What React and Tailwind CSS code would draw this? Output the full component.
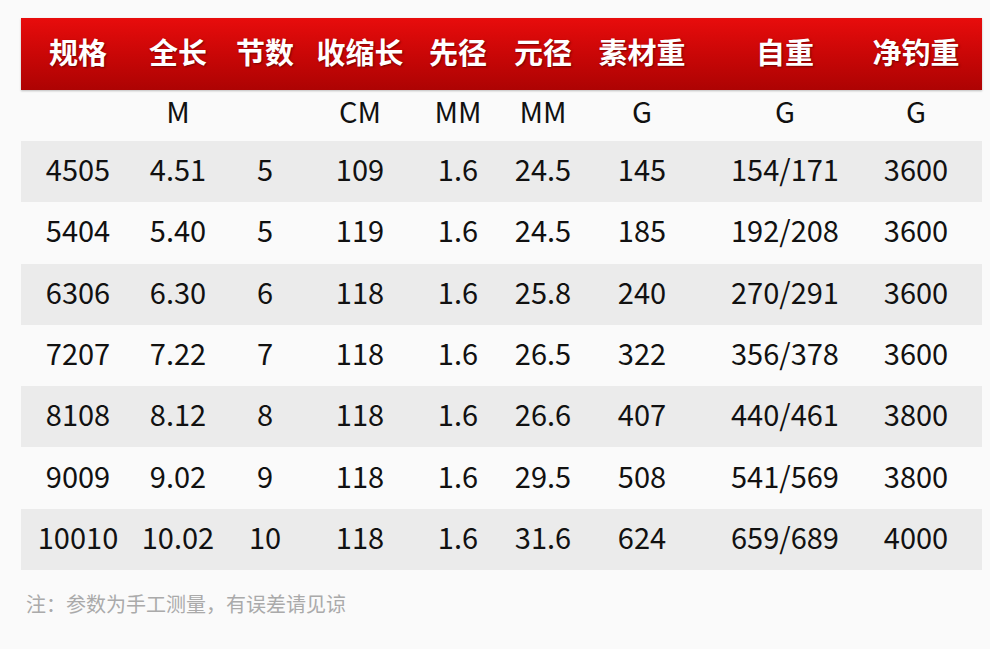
import React from 'react';

const cols = 'grid grid-cols-[114px_86px_88px_102px_94px_76px_122px_164px_98px]';

const heads = ['规格', '全长', '节数', '收缩长', '先径', '元径', '素材重', '自重', '净钓重'];
const units = ['', 'M', '', 'CM', 'MM', 'MM', 'G', 'G', 'G'];

const rows = [
  ['4505', '4.51', '5', '109', '1.6', '24.5', '145', '154/171', '3600'],
  ['5404', '5.40', '5', '119', '1.6', '24.5', '185', '192/208', '3600'],
  ['6306', '6.30', '6', '118', '1.6', '25.8', '240', '270/291', '3600'],
  ['7207', '7.22', '7', '118', '1.6', '26.5', '322', '356/378', '3600'],
  ['8108', '8.12', '8', '118', '1.6', '26.6', '407', '440/461', '3800'],
  ['9009', '9.02', '9', '118', '1.6', '29.5', '508', '541/569', '3800'],
  ['10010', '10.02', '10', '118', '1.6', '31.6', '624', '659/689', '4000'],
];

export default function App() {
  return (
    <div className="w-[990px] h-[649px] bg-[#fafafa] pt-[18px] pl-[21px] font-['Noto_Sans_CJK_SC','Noto_Sans',sans-serif] text-[#111]">
      <div className="w-[961px]">
        {/* header bar */}
        <div className={`${cols} h-[72px] items-center bg-linear-to-b from-[#e80c0c] to-[#ad0303] shadow-[0_1px_2px_rgba(0,0,0,0.25)]`}>
          {heads.map((h) => (
            <div
              key={h}
              className="pb-[6px] text-center text-white text-[29px] font-bold leading-none [text-shadow:1px_1px_2px_rgba(60,0,0,0.6)]"
            >
              {h}
            </div>
          ))}
        </div>

        {/* units */}
        <div className={`${cols} h-[51px] items-center`}>
          {units.map((u, i) => (
            <div key={i} className="pb-[10px] text-center text-[29px] leading-none">
              {u}
            </div>
          ))}
        </div>

        {/* data */}
        {rows.map((r, ri) => (
          <div
            key={r[0]}
            className={`${cols} h-[61.3px] items-center ${ri % 2 === 0 ? 'bg-[#ebebeb]' : ''}`}
          >
            {r.map((c, ci) => (
              <div key={ci} className="pb-[6px] text-center text-[29px] leading-none">
                {c}
              </div>
            ))}
          </div>
        ))}
      </div>

      <div className="mt-[24px] pl-[5px] text-[20px] text-[#aaaaaa] leading-none">
        注：参数为手工测量，有误差请见谅
      </div>
    </div>
  );
}
